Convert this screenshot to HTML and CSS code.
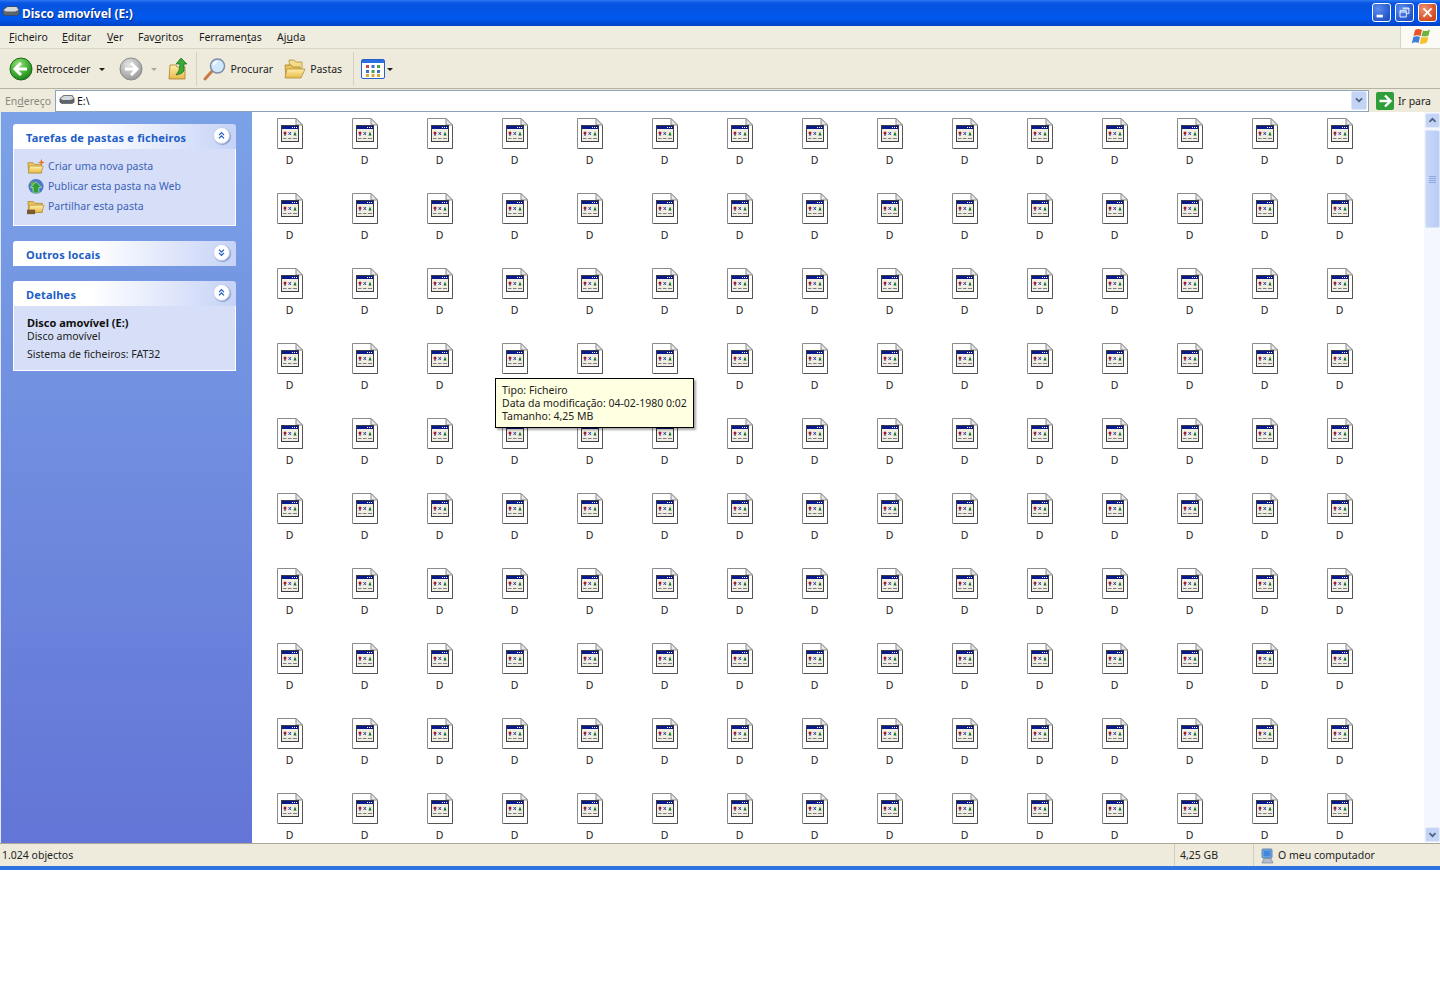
FILE: index.html
```html
<!DOCTYPE html>
<html lang="pt">
<head>
<meta charset="utf-8">
<title>Disco amovível (E:)</title>
<link rel="stylesheet" href="styles.css">
</head>
<body>
<svg class="defs" width="0" height="0" aria-hidden="true">
  <defs>
    <linearGradient id="gold" x1="0" y1="0" x2="0" y2="1"><stop offset="0" stop-color="#fff0a8"/><stop offset="1" stop-color="#e8b84a"/></linearGradient>
    <radialGradient id="green" cx=".4" cy=".3" r=".8"><stop offset="0" stop-color="#9be27a"/><stop offset=".6" stop-color="#3aa82e"/><stop offset="1" stop-color="#14701a"/></radialGradient>
    <radialGradient id="grey" cx=".4" cy=".3" r=".8"><stop offset="0" stop-color="#e6e6e6"/><stop offset="1" stop-color="#8f8f8f"/></radialGradient>
    <symbol id="file" viewBox="0 0 26 31">
      <path d="M.5.5H19L25.5 7V30.5H.5Z" fill="#fff" stroke="#8b8b8e"/>
      <path d="M25.500 8V30.500H1.500" fill="none" stroke="#555"/>
      <path d="M19 .5V7H25.5Z" fill="#e8e8e8" stroke="#8a8a8a"/>
      <rect x="4.500" y="7.500" width="17" height="16" fill="#f1eee0" stroke="#3c3c44"/>
      <rect x="5" y="8" width="16" height="3" fill="#0a1a8c"/>
      <rect x="15" y="9" width="1" height="1" fill="#fff"/><rect x="17" y="9" width="1" height="1" fill="#fff"/><rect x="19" y="9" width="1" height="1" fill="#fff"/>
      <circle cx="8" cy="15" r="1.500" fill="#a8182c"/><path d="M8 16V18" stroke="#2a2a8c"/>
      <path d="M11.500 14L14 17M14 14L11.500 17" stroke="#3444b0"/>
      <path d="M16.500 17.500L18 13.500L19.500 17.500Z" fill="#07702c"/>
      <path d="M6 20.500H9.500M11 20.500H14.500M16 20.500H20" stroke="#7a7a90"/>
    </symbol>
    <symbol id="drive" viewBox="0 0 18 12">
      <path d="M1 5L5 1.500H15L17 5V9L15 10.500H3L1 9Z" fill="#5e646b" stroke="#3c4248" stroke-width=".6"/>
      <path d="M1.500 5L5.500 2H14.500L16.500 5L13 6.500H4Z" fill="#d4d8dc"/>
    </symbol>
    <symbol id="folder" viewBox="0 1 20 16">
      <path d="M1 4H7L9 6H17V16H2Z" fill="#e9c25a" stroke="#a8822c" stroke-width=".8"/>
      <path d="M3 8H19L16.500 16H1.500Z" fill="url(#gold)" stroke="#b18f38" stroke-width=".8"/>
    </symbol>
  </defs>
</svg>
<div class="window">
  <header class="titlebar">
    <svg class="title-icon"><use href="#drive"/></svg>
    <h1 class="title">Disco amovível (E:)</h1>
    <div class="caption">
      <span class="cap cap-blue"><svg viewBox="0 0 19 19"><rect x="4" y="12" width="7" height="3" fill="#fff"/></svg></span>
      <span class="cap cap-blue"><svg viewBox="0 0 19 19"><path d="M7.500 4.500H14.500V10.500H12M4.500 7.500H11.500V14.500H4.500ZM4.500 9H11.500M7.500 5.500H14.500" fill="none" stroke="#fff"/></svg></span>
      <span class="cap cap-red"><svg viewBox="0 0 19 19"><path d="M5 5L14 14M14 5L5 14" stroke="#fff" stroke-width="2"/></svg></span>
    </div>
  </header>

  <nav class="menubar">
    <div class="menus">
      <span><u>F</u>icheiro</span><span><u>E</u>ditar</span><span><u>V</u>er</span><span>Fav<u>o</u>ritos</span><span>Ferramen<u>t</u>as</span><span>Aj<u>u</u>da</span>
    </div>
    <div class="flag">
      <svg viewBox="0 0 20 20" width="20" height="20">
        <path d="M4 3Q7 1 11 3L9.500 9Q6 7.500 2.500 9Z" fill="#e8552a"/>
        <path d="M12 3.500Q15 5 19 2.500L17.500 8.500Q14 10 10.500 9Z" fill="#6cb33f"/>
        <path d="M2.300 10Q6 8.500 9 10L7.500 16Q4 14.500 .8 16.500Z" fill="#3f7fd6"/>
        <path d="M10.300 10Q13.500 11 17.300 9.500L16 15.500Q12.500 17.500 8.700 16.500Z" fill="#f5c22e"/>
      </svg>
    </div>
  </nav>

  <div class="toolbar">
    <div class="tool tool-back">
      <svg class="nav-ic" viewBox="0 0 24 24"><circle cx="12" cy="12" r="11" fill="url(#green)" stroke="#1c6a1c"/><path d="M12 6L6 12L12 18M6.500 12H18" fill="none" stroke="#fff" stroke-width="3"/></svg>
      <span>Retroceder</span><i class="caret"></i>
    </div>
    <div class="tool tool-fwd">
      <svg class="nav-ic" viewBox="0 0 24 24"><circle cx="12" cy="12" r="11" fill="url(#grey)" stroke="#8c8c8c"/><path d="M12 6L18 12L12 18M17.500 12H6" fill="none" stroke="#fff" stroke-width="3"/></svg>
      <i class="caret caret-off"></i>
    </div>
    <svg class="up-ic" viewBox="0 0 22 24"><path d="M2 8H8L9 10H17V22H1Z" fill="url(#gold)" stroke="#a8822c" stroke-width=".8"/><path d="M13 1L19 7H16V14Q14 17 8 18Q12 14 12 7H8Z" fill="#3ba935" stroke="#1a6a1c" stroke-width=".7"/></svg>
    <b class="sep"></b>
    <div class="tool tool-search">
      <svg class="search-ic" viewBox="0 0 24 24"><path d="M2 22L10 13" stroke="#c97a45" stroke-width="3" stroke-linecap="round"/><circle cx="14.500" cy="9" r="7" fill="#cfe8fb" stroke="#7d8ea6" stroke-width="1.500"/><path d="M10.500 8Q11.500 5 14.500 4.500" fill="none" stroke="#fff" stroke-width="1.500"/></svg>
      <span>Procurar</span>
    </div>
    <div class="tool tool-folders">
      <svg class="folders-ic" viewBox="0 0 22 20"><path d="M5 1H10L12 3H18V13H6Z" fill="#f2dc8a" stroke="#b1923f" stroke-width=".8"/><path d="M1 6H7L9 8H16V18H2Z" fill="#e9c25a" stroke="#a8822c" stroke-width=".8"/><path d="M3 10H21L17 19H1Z" fill="url(#gold)" stroke="#b18f38" stroke-width=".8"/></svg>
      <span>Pastas</span>
    </div>
    <b class="sep sep-views"></b>
    <div class="tool tool-views">
      <svg class="views-ic" viewBox="0 0 24 20"><rect x=".5" y=".5" width="23" height="19" rx="1.500" fill="#fff" stroke="#2a5fc4"/><rect x="1" y="1" width="22" height="3" fill="#2a6fe0"/><g fill="#c54a3c"><rect x="5" y="6" width="3" height="3"/></g><g fill="#3d6fd0"><rect x="10.500" y="6" width="3" height="3"/><rect x="5" y="11" width="3" height="3"/><rect x="16" y="11" width="3" height="3"/></g><g fill="#4aa04a"><rect x="16" y="6" width="3" height="3"/><rect x="10.500" y="11" width="3" height="3"/></g><g fill="#d8a93a"><rect x="5" y="15" width="3" height="3"/><rect x="10.500" y="15" width="3" height="3"/><rect x="16" y="15" width="3" height="3"/></g></svg>
      <i class="caret"></i>
    </div>
  </div>

  <div class="addressbar">
    <span class="addr-label">En<u>d</u>ereço</span>
    <div class="addr-field">
      <svg class="addr-icon"><use href="#drive"/></svg>
      <span class="addr-text">E:\</span>
      <span class="addr-drop"><svg viewBox="0 0 16 17"><path d="M4.500 6L8 9.500L11.500 6" fill="none" stroke="#4d6185" stroke-width="2"/></svg></span>
    </div>
    <div class="go">
      <svg class="go-ic" viewBox="0 0 18 18"><rect width="18" height="18" rx="2" fill="#2f9e3a"/><path d="M9 3.500L14.500 9L9 14.500M14 9H3.500" fill="none" stroke="#fff" stroke-width="2.400"/></svg>
      <span>Ir para</span>
    </div>
  </div>

  <div class="main">
    <aside class="sidebar">
      <section class="panel">
        <div class="panel-head"><h2>Tarefas de pastas e ficheiros</h2><span class="chev"><svg viewBox="0 0 18 18"><path d="M6 8.500L9 5.500L12 8.500M6 12.500L9 9.500L12 12.500" fill="none" stroke="#215dc6" stroke-width="1.500"/></svg></span></div>
        <ul class="panel-body tasks">
          <li><svg class="task-ic" viewBox="0 0 20 17"><use href="#folder" width="19" height="16" y="1"/><path d="M16 0L17 3L20 4L17 5L16 8L15 5L12 4L15 3Z" fill="#e8752a"/></svg>Criar uma nova pasta</li>
          <li><svg class="task-ic" viewBox="0 0 18 18"><circle cx="9" cy="9" r="8" fill="#4a78c8"/><path d="M3 5Q7 2 9 6T5 13Z" fill="#6aa84f"/><path d="M9 4L15 10H12V16H6V10H3Z" fill="#2f9e3a" stroke="#e2f3dc" stroke-width=".6"/></svg>Publicar esta pasta na Web</li>
          <li><svg class="task-ic" viewBox="0 0 20 17"><use href="#folder" width="20" height="16"/><path d="M0 12H9V17H0Z" fill="#7a5a2c"/></svg>Partilhar esta pasta</li>
        </ul>
      </section>
      <section class="panel">
        <div class="panel-head panel-closed"><h2>Outros locais</h2><span class="chev"><svg viewBox="0 0 18 18"><path d="M6 5.500L9 8.500L12 5.500M6 9.500L9 12.500L12 9.500" fill="none" stroke="#215dc6" stroke-width="1.500"/></svg></span></div>
      </section>
      <section class="panel">
        <div class="panel-head"><h2>Detalhes</h2><span class="chev"><svg viewBox="0 0 18 18"><path d="M6 8.500L9 5.500L12 8.500M6 12.500L9 9.500L12 12.500" fill="none" stroke="#215dc6" stroke-width="1.500"/></svg></span></div>
        <div class="panel-body details">
          <strong>Disco amovível (E:)</strong>
          <p>Disco amovível</p>
          <p class="fs">Sistema de ficheiros: FAT32</p>
        </div>
      </section>
    </aside>

    <div class="content">
      <div class="grid">
        <div class="f"><svg><use href="#file"/></svg>D</div><div class="f"><svg><use href="#file"/></svg>D</div><div class="f"><svg><use href="#file"/></svg>D</div><div class="f"><svg><use href="#file"/></svg>D</div><div class="f"><svg><use href="#file"/></svg>D</div><div class="f"><svg><use href="#file"/></svg>D</div><div class="f"><svg><use href="#file"/></svg>D</div><div class="f"><svg><use href="#file"/></svg>D</div><div class="f"><svg><use href="#file"/></svg>D</div><div class="f"><svg><use href="#file"/></svg>D</div><div class="f"><svg><use href="#file"/></svg>D</div><div class="f"><svg><use href="#file"/></svg>D</div><div class="f"><svg><use href="#file"/></svg>D</div><div class="f"><svg><use href="#file"/></svg>D</div><div class="f"><svg><use href="#file"/></svg>D</div>
        <div class="f"><svg><use href="#file"/></svg>D</div><div class="f"><svg><use href="#file"/></svg>D</div><div class="f"><svg><use href="#file"/></svg>D</div><div class="f"><svg><use href="#file"/></svg>D</div><div class="f"><svg><use href="#file"/></svg>D</div><div class="f"><svg><use href="#file"/></svg>D</div><div class="f"><svg><use href="#file"/></svg>D</div><div class="f"><svg><use href="#file"/></svg>D</div><div class="f"><svg><use href="#file"/></svg>D</div><div class="f"><svg><use href="#file"/></svg>D</div><div class="f"><svg><use href="#file"/></svg>D</div><div class="f"><svg><use href="#file"/></svg>D</div><div class="f"><svg><use href="#file"/></svg>D</div><div class="f"><svg><use href="#file"/></svg>D</div><div class="f"><svg><use href="#file"/></svg>D</div>
        <div class="f"><svg><use href="#file"/></svg>D</div><div class="f"><svg><use href="#file"/></svg>D</div><div class="f"><svg><use href="#file"/></svg>D</div><div class="f"><svg><use href="#file"/></svg>D</div><div class="f"><svg><use href="#file"/></svg>D</div><div class="f"><svg><use href="#file"/></svg>D</div><div class="f"><svg><use href="#file"/></svg>D</div><div class="f"><svg><use href="#file"/></svg>D</div><div class="f"><svg><use href="#file"/></svg>D</div><div class="f"><svg><use href="#file"/></svg>D</div><div class="f"><svg><use href="#file"/></svg>D</div><div class="f"><svg><use href="#file"/></svg>D</div><div class="f"><svg><use href="#file"/></svg>D</div><div class="f"><svg><use href="#file"/></svg>D</div><div class="f"><svg><use href="#file"/></svg>D</div>
        <div class="f"><svg><use href="#file"/></svg>D</div><div class="f"><svg><use href="#file"/></svg>D</div><div class="f"><svg><use href="#file"/></svg>D</div><div class="f"><svg><use href="#file"/></svg></div><div class="f"><svg><use href="#file"/></svg></div><div class="f"><svg><use href="#file"/></svg></div><div class="f"><svg><use href="#file"/></svg>D</div><div class="f"><svg><use href="#file"/></svg>D</div><div class="f"><svg><use href="#file"/></svg>D</div><div class="f"><svg><use href="#file"/></svg>D</div><div class="f"><svg><use href="#file"/></svg>D</div><div class="f"><svg><use href="#file"/></svg>D</div><div class="f"><svg><use href="#file"/></svg>D</div><div class="f"><svg><use href="#file"/></svg>D</div><div class="f"><svg><use href="#file"/></svg>D</div>
        <div class="f"><svg><use href="#file"/></svg>D</div><div class="f"><svg><use href="#file"/></svg>D</div><div class="f"><svg><use href="#file"/></svg>D</div><div class="f"><svg><use href="#file"/></svg>D</div><div class="f"><svg><use href="#file"/></svg>D</div><div class="f"><svg><use href="#file"/></svg>D</div><div class="f"><svg><use href="#file"/></svg>D</div><div class="f"><svg><use href="#file"/></svg>D</div><div class="f"><svg><use href="#file"/></svg>D</div><div class="f"><svg><use href="#file"/></svg>D</div><div class="f"><svg><use href="#file"/></svg>D</div><div class="f"><svg><use href="#file"/></svg>D</div><div class="f"><svg><use href="#file"/></svg>D</div><div class="f"><svg><use href="#file"/></svg>D</div><div class="f"><svg><use href="#file"/></svg>D</div>
        <div class="f"><svg><use href="#file"/></svg>D</div><div class="f"><svg><use href="#file"/></svg>D</div><div class="f"><svg><use href="#file"/></svg>D</div><div class="f"><svg><use href="#file"/></svg>D</div><div class="f"><svg><use href="#file"/></svg>D</div><div class="f"><svg><use href="#file"/></svg>D</div><div class="f"><svg><use href="#file"/></svg>D</div><div class="f"><svg><use href="#file"/></svg>D</div><div class="f"><svg><use href="#file"/></svg>D</div><div class="f"><svg><use href="#file"/></svg>D</div><div class="f"><svg><use href="#file"/></svg>D</div><div class="f"><svg><use href="#file"/></svg>D</div><div class="f"><svg><use href="#file"/></svg>D</div><div class="f"><svg><use href="#file"/></svg>D</div><div class="f"><svg><use href="#file"/></svg>D</div>
        <div class="f"><svg><use href="#file"/></svg>D</div><div class="f"><svg><use href="#file"/></svg>D</div><div class="f"><svg><use href="#file"/></svg>D</div><div class="f"><svg><use href="#file"/></svg>D</div><div class="f"><svg><use href="#file"/></svg>D</div><div class="f"><svg><use href="#file"/></svg>D</div><div class="f"><svg><use href="#file"/></svg>D</div><div class="f"><svg><use href="#file"/></svg>D</div><div class="f"><svg><use href="#file"/></svg>D</div><div class="f"><svg><use href="#file"/></svg>D</div><div class="f"><svg><use href="#file"/></svg>D</div><div class="f"><svg><use href="#file"/></svg>D</div><div class="f"><svg><use href="#file"/></svg>D</div><div class="f"><svg><use href="#file"/></svg>D</div><div class="f"><svg><use href="#file"/></svg>D</div>
        <div class="f"><svg><use href="#file"/></svg>D</div><div class="f"><svg><use href="#file"/></svg>D</div><div class="f"><svg><use href="#file"/></svg>D</div><div class="f"><svg><use href="#file"/></svg>D</div><div class="f"><svg><use href="#file"/></svg>D</div><div class="f"><svg><use href="#file"/></svg>D</div><div class="f"><svg><use href="#file"/></svg>D</div><div class="f"><svg><use href="#file"/></svg>D</div><div class="f"><svg><use href="#file"/></svg>D</div><div class="f"><svg><use href="#file"/></svg>D</div><div class="f"><svg><use href="#file"/></svg>D</div><div class="f"><svg><use href="#file"/></svg>D</div><div class="f"><svg><use href="#file"/></svg>D</div><div class="f"><svg><use href="#file"/></svg>D</div><div class="f"><svg><use href="#file"/></svg>D</div>
        <div class="f"><svg><use href="#file"/></svg>D</div><div class="f"><svg><use href="#file"/></svg>D</div><div class="f"><svg><use href="#file"/></svg>D</div><div class="f"><svg><use href="#file"/></svg>D</div><div class="f"><svg><use href="#file"/></svg>D</div><div class="f"><svg><use href="#file"/></svg>D</div><div class="f"><svg><use href="#file"/></svg>D</div><div class="f"><svg><use href="#file"/></svg>D</div><div class="f"><svg><use href="#file"/></svg>D</div><div class="f"><svg><use href="#file"/></svg>D</div><div class="f"><svg><use href="#file"/></svg>D</div><div class="f"><svg><use href="#file"/></svg>D</div><div class="f"><svg><use href="#file"/></svg>D</div><div class="f"><svg><use href="#file"/></svg>D</div><div class="f"><svg><use href="#file"/></svg>D</div>
        <div class="f"><svg><use href="#file"/></svg>D</div><div class="f"><svg><use href="#file"/></svg>D</div><div class="f"><svg><use href="#file"/></svg>D</div><div class="f"><svg><use href="#file"/></svg>D</div><div class="f"><svg><use href="#file"/></svg>D</div><div class="f"><svg><use href="#file"/></svg>D</div><div class="f"><svg><use href="#file"/></svg>D</div><div class="f"><svg><use href="#file"/></svg>D</div><div class="f"><svg><use href="#file"/></svg>D</div><div class="f"><svg><use href="#file"/></svg>D</div><div class="f"><svg><use href="#file"/></svg>D</div><div class="f"><svg><use href="#file"/></svg>D</div><div class="f"><svg><use href="#file"/></svg>D</div><div class="f"><svg><use href="#file"/></svg>D</div><div class="f"><svg><use href="#file"/></svg>D</div>
      </div>
      <div class="tooltip">Tipo: Ficheiro<br>Data da modificação: 04-02-1980 0:02<br>Tamanho: 4,25 MB</div>
    </div>

    <div class="scrollbar">
      <span class="sb-btn"><svg viewBox="0 0 15 15"><path d="M4 9L7.500 5.500L11 9" fill="none" stroke="#4d6185" stroke-width="2"/></svg></span>
      <div class="sb-track">
        <div class="sb-thumb"><i></i><i></i><i></i><i></i></div>
      </div>
      <span class="sb-btn"><svg viewBox="0 0 15 15"><path d="M4 6L7.500 9.500L11 6" fill="none" stroke="#4d6185" stroke-width="2"/></svg></span>
    </div>
  </div>

  <footer class="statusbar">
    <span class="st st-main">1.024 objectos</span>
    <span class="st st-size">4,25 GB</span>
    <span class="st st-zone"><svg class="zone-ic" viewBox="0 0 14 16"><rect x="2" y="1" width="10" height="9" rx="1" fill="#7fb0e8" stroke="#50709c" stroke-width=".8"/><rect x="3.500" y="2.500" width="7" height="6" fill="#3f88dc"/><path d="M2 15L4 10.500H11L13 15Z" fill="#b5bfcc" stroke="#6a7688" stroke-width=".6"/></svg>O meu computador</span>
  </footer>
</div>
</body>
</html>
```

FILE: styles.css
```css
* { box-sizing: border-box; }
html, body { margin: 0; padding: 0; background: #fff; }
body { font: 10.5px/13px "Noto Sans", sans-serif; color: #1c1c1c; }
.defs { position: absolute; }
u { text-decoration: underline; }

.window { width: 1440px; height: 870px; display: flex; flex-direction: column; border-bottom: 4px solid #2d74e0; }

/* title */
.titlebar { height: 26px; flex: none; display: flex; align-items: center; padding: 0 3px 0 2px; background: linear-gradient(#2a78f0 0, #0a55e5 3px, #0454e0 8px, #0058ee 18px, #0042c8 26px); }
.title-icon { width: 18px; height: 12px; margin-right: 2px; margin-top: -4px; }
.title { margin: 2px 0 0; flex: 1; font: bold 12px/16px "Noto Sans", sans-serif; color: #fff; text-shadow: 1px 1px #0a2a88; }
.caption { display: flex; gap: 4px; margin-top: -1px; }
.cap { width: 19px; height: 19px; border: 1px solid #fff; border-radius: 3px; display: block; }
.cap svg { display: block; width: 17px; height: 17px; }
.cap-blue { background: radial-gradient(circle at 30% 30%, #5a8ef0, #2454c8 75%); }
.cap-red { background: radial-gradient(circle at 30% 30%, #ef9070, #d04a20 75%); }

/* menu */
.menubar { height: 23px; flex: none; display: flex; background: #efede0; border-bottom: 1px solid #d8d5c4; }
.menus { flex: 1; display: grid; grid-template-columns: 53px 45px 31px 61px 78px 1fr; align-items: center; padding: 0 0 0 9px; }
.flag { width: 40px; background: #fbfaf5; border-left: 1px solid #d8d5c4; display: flex; align-items: center; justify-content: center; }

/* toolbar */
.toolbar { height: 40px; flex: none; display: flex; align-items: center; padding-top: 1px; background: #eeebdd; border-bottom: 1px solid #b5b29f; }
.tool { display: flex; align-items: center; }
.nav-ic { width: 24px; height: 24px; flex: none; }
.tool-back { margin-left: 9px; }
.tool-back span { margin-left: 3px; }
.tool-fwd { margin-left: 14px; }
.caret { width: 0; height: 0; border: 3px solid transparent; border-top: 3px solid #1c1c1c; border-bottom: 0; margin-left: 9px; }
.tool-fwd .caret { margin-left: 8px; }
.caret-off { border-top-color: #a8a8a0; }
.up-ic { width: 22px; height: 24px; margin-left: 11px; flex: none; }
.sep { width: 1px; height: 34px; background: #d5d2c0; margin-left: 6px; }
.tool-search { margin-left: 6px; }
.search-ic { width: 24px; height: 24px; flex: none; margin-right: 3px; }
.tool-folders { margin-left: 11px; }
.folders-ic { width: 22px; height: 20px; flex: none; margin-right: 4px; }
.sep-views { margin-left: 11px; }
.tool-views { margin-left: 7px; }
.views-ic { width: 24px; height: 20px; flex: none; }
.tool-views .caret { margin-left: 2px; }

/* address */
.addressbar { height: 23px; flex: none; display: flex; align-items: center; background: #eeebdd; }
.addr-label { width: 55px; padding: 1px 0 0 5px; color: #8a887c; }
.addr-field { width: 1314px; height: 22px; background: #fff; border: 1px solid #8ea4bd; display: flex; align-items: center; padding-left: 3px; color: #111; }
.addr-icon { width: 16px; height: 11px; margin-right: 2px; margin-top: -3px; }
.addr-text { flex: 1; padding-top: 1px; }
.addr-drop { width: 16px; height: 19px; background: #c3d3f3; border: 1px solid #dde6f8; border-radius: 2px; margin-right: 1px; }
.addr-drop svg { display: block; width: 14px; height: 17px; }
.go { display: flex; align-items: center; margin-left: 7px; }
.go span { padding-top: 1px; }
.go-ic { width: 18px; height: 18px; margin-right: 4px; }

/* main */
.main { flex: 1; min-height: 0; display: flex; }
.sidebar { width: 252px; flex: none; padding: 12px 16px 0 12px; border-left: 1px solid #dfe8fa; background: linear-gradient(#7ba2e7, #6375d6); display: flex; flex-direction: column; gap: 15px; }
.panel-head { height: 25px; display: flex; justify-content: space-between; padding: 0 6px 0 13px; background: linear-gradient(90deg, #fff 0, #fff 35%, #c6d3f7 100%); border-radius: 3px 3px 0 0; }
.panel-head h2 { margin: 0; font: bold 11px/27px "Noto Sans", sans-serif; letter-spacing: .2px; color: #215dc6; }
.chev { width: 17px; height: 17px; margin-top: 3px; border-radius: 50%; background: #fff; border: 1px solid #c4cfe9; box-shadow: 1px 1px 1px #8a9cc9; }
.chev svg { display: block; width: 15px; height: 15px; }
.panel-body { margin: 0; background: #d6dff7; border: 1px solid #fff; border-top: 0; list-style: none; }
.tasks { height: 77px; padding: 7px 0 0 13px; }
.tasks li { height: 20px; display: flex; align-items: center; color: #3c62b8; }
.task-ic { width: 18px; height: 17px; margin-right: 3px; flex: none; }
.details { height: 65px; padding: 10px 0 0 13px; color: #222; }
.details strong { display: block; font: bold 11px/14px "Noto Sans", sans-serif; color: #111; }
.details p { margin: 0; line-height: 13px; }
.details .fs { margin-top: 5px; }

/* content */
.content { flex: 1; min-width: 0; position: relative; overflow: hidden; background: #fff; }
.grid { display: grid; grid-template-columns: repeat(15, 75px); grid-auto-rows: 75px; padding: 6px 0 0 0; }
.f { text-align: center; line-height: 13px; color: #222; }
.f svg { display: block; width: 26px; height: 31px; margin: 0 0 5px 25px; }
.tooltip { position: absolute; left: 243px; top: 266px; width: 199px; height: 50px; padding: 5px 0 0 6px; white-space: nowrap; background: #ffffe1; border: 1px solid #000; box-shadow: 2px 2px 2px rgba(0,0,0,.35); line-height: 13px; color: #222; }

/* scrollbar */
.scrollbar { width: 16px; flex: none; display: flex; flex-direction: column; background: #f4f7fd; padding: 1px 0; }
.sb-btn { width: 15px; height: 15px; flex: none; margin-left: 1px; background: #c4d4f5; border: 1px solid #e4ebfa; border-radius: 2px; }
.sb-btn svg { display: block; width: 13px; height: 13px; }
.sb-track { flex: 1; padding-top: 2px; }
.sb-thumb { width: 15px; height: 98px; margin-left: 1px; background: linear-gradient(90deg, #c9d8f8, #b9ccf5); border: 1px solid #dbe5fa; border-radius: 2px; display: flex; flex-direction: column; justify-content: center; align-items: center; gap: 1px; }
.sb-thumb i { display: block; width: 7px; height: 1px; background: #8ea8de; }

/* status */
.statusbar { height: 23px; flex: none; display: flex; align-items: center; background: #eeebdd; border-top: 1px solid #aca899; color: #222; }
.st { display: flex; align-items: center; height: 100%; padding-top: 1px; }
.st-main { width: 1174px; padding-left: 2px; }
.st-size { width: 79px; padding-left: 5px; border-left: 1px solid #d2cfbc; }
.st-zone { flex: 1; padding-left: 6px; border-left: 1px solid #d2cfbc; }
.zone-ic { width: 14px; height: 16px; margin-right: 4px; }
```
